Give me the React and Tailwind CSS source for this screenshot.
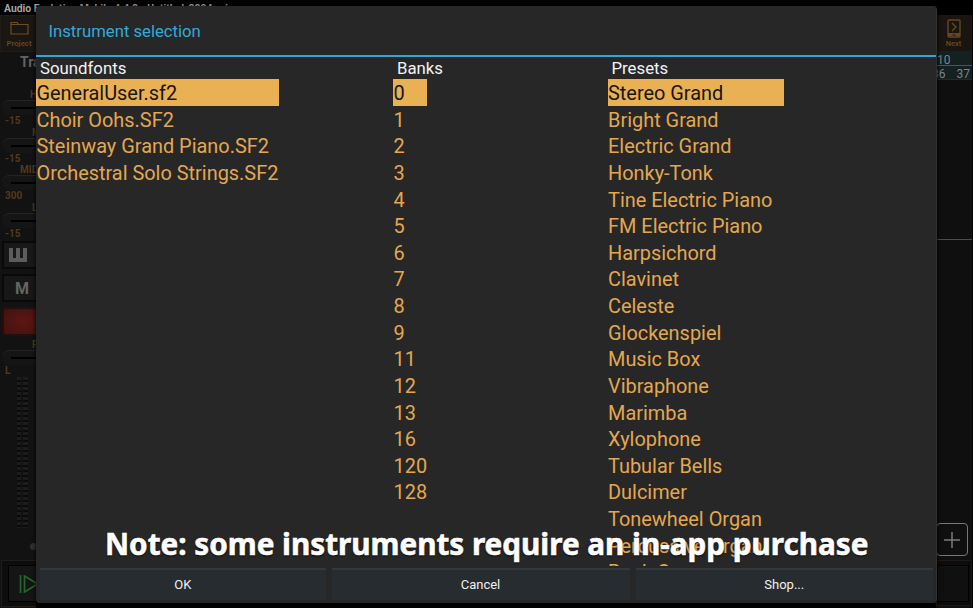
import React from 'react';

const soundfonts = ['GeneralUser.sf2', 'Choir Oohs.SF2', 'Steinway Grand Piano.SF2', 'Orchestral Solo Strings.SF2'];

const banks = ['0', '1', '2', '3', '4', '5', '6', '7', '8', '9', '11', '12', '13', '16', '120', '128'];

const presets = [
    'Stereo Grand',
    'Bright Grand',
    'Electric Grand',
    'Honky-Tonk',
    'Tine Electric Piano',
    'FM Electric Piano',
    'Harpsichord',
    'Clavinet',
    'Celeste',
    'Glockenspiel',
    'Music Box',
    'Vibraphone',
    'Marimba',
    'Xylophone',
    'Tubular Bells',
    'Dulcimer',
    'Tonewheel Organ',
    'Percussive Organ',
    'Rock Organ',
];

const knobs = [
    { label: 'HI', value: '-15' },
    { label: 'MID', value: '-15' },
    { label: 'MID F', value: '300' },
    { label: 'LO', value: '-15' },
];

const Column = ({ title, items, width, className }) => (
    <div className={className}>
        <h2 className="h-[22px] pl-1 text-[16.8px] leading-[23px] text-[#f2f2f2]">{title}</h2>
        <ul className={width}>
            {items.map((item, index) => (
                <li
                    key={item}
                    className={`h-[26.63px] whitespace-nowrap pl-[0.5px] text-[19.92px] leading-[29px] ${
                        index === 0 ? 'bg-[#e9b054] text-[#171717]' : 'text-[#e3a84f]'
                    }`}
                >
                    {item}
                </li>
            ))}
        </ul>
    </div>
);

const Slider = () => (
    <div className="ml-[2px] flex h-[15px] w-10 items-center rounded-l-full border-t border-[#242424] bg-[#151515] pl-[9px]">
        <div className="h-[2px] w-full bg-black" />
    </div>
);

// Dimmed channel strip on the left edge
const ChannelStrip = () => (
    <div className="flex w-[36px] flex-col overflow-hidden bg-[#121212]">
        <div className="flex h-[37px] w-[38px] shrink-0 flex-col items-center border border-[#211b16] bg-[#1a1613] pt-[5px]">
            <svg width="19" height="14" viewBox="0 0 19 14" fill="none" stroke="#6b4f22" strokeWidth="1.2">
                <path d="M1 13V1.5h6l1.5 2H18V13zM1 3.5h8" />
            </svg>
            <span className="mt-[4px] text-[7.8px] font-bold leading-[10px] text-[#5f461f]">Project</span>
        </div>
        <div className="h-[37px] shrink-0 whitespace-nowrap pl-5 text-[14px] font-bold leading-[20px] text-[#626262]">Track</div>
        {knobs.map((knob) => (
            <div key={knob.label} className="h-[37.6px] shrink-0 whitespace-nowrap text-[10px] font-bold text-[#513b1c]">
                <div className={`h-[11px] leading-[11px] ${knob.label === 'MID F' ? 'pl-[20px]' : knob.label === 'HI' ? 'pl-[30px]' : 'pl-[32px]'}`}>{knob.label}</div>
                <Slider />
                <div className="pl-[5px] leading-[11px]">{knob.value}</div>
            </div>
        ))}
        <div className="ml-[2px] mt-[2px] flex h-[28px] w-10 shrink-0 items-center border-2 border-[#090909] bg-[#181818] pl-[5px]">
            <svg width="18" height="14" viewBox="0 0 18 14" fill="none" stroke="#5c5c5c" strokeWidth="4">
                <path d="M2 0v12h14V0M9 0v12" />
            </svg>
        </div>
        <div className="ml-[2px] mt-[5px] h-[28px] w-10 shrink-0 border-2 border-[#090909] bg-[#171717] pl-[11px] text-[16px] font-bold leading-[26px] text-[#656565]">
            M
        </div>
        <div className="ml-[2px] mt-[5px] h-[29px] w-10 shrink-0 rounded-sm border-2 border-[#250e0c] bg-radial from-[#5c1713] to-[#42120e]" />
        <div className="mt-[3px] h-[11px] shrink-0 pl-[32px] text-[10px] font-bold leading-[11px] text-[#513b1c]">PAN</div>
        <div className="shrink-0">
            <Slider />
        </div>
        <div className="shrink-0 pl-[5px] text-[10px] font-bold leading-[12px] text-[#513b1c]">L</div>
        <div className="ml-[17px] flex h-[151px] shrink-0 gap-[2px]">
            <div className="w-[4px] bg-[repeating-linear-gradient(#1c1c1c_0_3px,#0b0b0b_3px_5px)]" />
            <div className="w-[5px] bg-[repeating-linear-gradient(#1c1c1c_0_3px,#0b0b0b_3px_5px)]" />
        </div>
        <div className="ml-[30px] mt-[15px] h-[7px] w-[7px] shrink-0 rounded-full bg-[#303030]" />
        <div className="ml-px mt-[10px] h-[47px] w-10 shrink-0 border border-[#201c19] bg-[#0d0d0d] pl-[6px] pt-[4px]">
            <div className="flex h-[37px] items-center border border-black bg-[#151515] pl-[10px]">
                <svg width="20" height="20" viewBox="0 0 20 20" className="shrink-0" fill="none" stroke="#23652c" strokeWidth="1.7">
                    <path d="M1.5 1v18M5.5 2v16l13-8z" />
                </svg>
            </div>
        </div>
    </div>
);

// Dimmed arranger strip on the right edge
const ArrangerStrip = () => (
    <div className="flex w-[37px] flex-col border-r border-black bg-[#0f0f0f]">
        <div className="flex h-[36px] flex-col items-center bg-[#1a1511] pr-px pt-[4px]">
            <svg width="14" height="19" viewBox="0 0 14 19" fill="none" stroke="#654820">
                <rect x="1" y="1" width="12" height="17" rx="1" strokeWidth="1.4" />
                <path d="M5 4l4 4-4 4" strokeWidth="1.4" />
                <path d="M1 15.5h12" strokeWidth="3" />
                <path d="M5.5 16h3" stroke="#171310" />
            </svg>
            <span className="mt-px text-[7.5px] font-bold leading-[10px] text-[#5f441e]">Next</span>
        </div>
        <div className="h-[15px] border-b border-[#4b5555] bg-[#142021] pl-px text-[12px] leading-[18px] text-[#7e8585]">10</div>
        <div className="flex h-[14px] justify-between border-b border-[#222b2b] bg-[#142021] pr-[2px] text-[12px] leading-[16px] text-[#7e8585]">
            <span className="-ml-[4px]">36</span>
            <span>37</span>
        </div>
        <div className="h-[160px] border-b border-[#4c4c4c]" />
        <div className="mt-[283px] flex h-[33px] w-[32px] items-center justify-center rounded-sm border border-[#777777] bg-[#0f0f0f]">
            <svg width="16" height="16" viewBox="0 0 16 16" stroke="#7c7c7c" strokeWidth="1.5">
                <path d="M8 0v16M0 8h16" />
            </svg>
        </div>
        <div className="mt-[4px] h-[46px] border border-[#1d1815] bg-[#0c0c0c] pr-[2px] pt-[4px]">
            <div className="h-[37px] border border-black bg-[#101010]" />
        </div>
    </div>
);

const InstrumentDialog = () => (
    <section className="absolute left-[36px] top-[6px] flex h-[597px] w-[901px] flex-col rounded-sm border-r border-[#303030] bg-[#272727] shadow-[0_1px_4px_#000]">
        <header className="h-[51px] shrink-0 border-b-2 border-[#35a5cd] pl-[12.5px] text-[16.7px] leading-[51px] text-[#35a9d8]">
            Instrument selection
        </header>
        <div className="flex h-[509px] shrink-0 overflow-hidden">
            <Column title="Soundfonts" items={soundfonts} width="w-[243px]" className="w-[357px]" />
            <Column title="Banks" items={banks} width="w-[34px]" className="w-[214.5px]" />
            <Column title="Presets" items={presets} width="w-[176.5px]" className="flex-1" />
        </div>
        <footer className="mt-[2px] flex h-[32px] shrink-0 gap-[6px] pl-[4px] pr-[3px] text-[13px] text-[#f0f0f0]">
            <button className="w-[285.5px] border-t-2 border-[#34383a] bg-[#272c30]">OK</button>
            <button className="w-[298px] border-t-2 border-[#34383a] bg-[#272c30]">Cancel</button>
            <button className="flex-1 border-t-2 border-[#34383a] bg-[#272c30]">Shop...</button>
        </footer>
    </section>
);

const App = () => (
    <main className="relative flex h-[608px] w-[973px] flex-col overflow-hidden bg-black font-['Roboto',sans-serif]">
        <div className="h-[15px] shrink-0 pl-1 text-[10.4px] font-bold leading-[17px] text-[#a4a4a4]">Audio Evolution Mobile 4.4.8 - Untitled_2204.prj</div>
        <div className="flex min-h-0 flex-1 justify-between">
            <ChannelStrip />
            <ArrangerStrip />
        </div>
        <InstrumentDialog />
        <p className="absolute left-[105px] top-[521px] origin-left scale-x-[0.957] whitespace-nowrap font-['Noto_Sans',sans-serif] text-[31px] font-bold leading-[44px] text-white [-webkit-text-stroke:0.6px_white] [text-shadow:0_1px_2px_#000]">
            Note: some instruments require an in-app purchase
        </p>
    </main>
);

export default App;
